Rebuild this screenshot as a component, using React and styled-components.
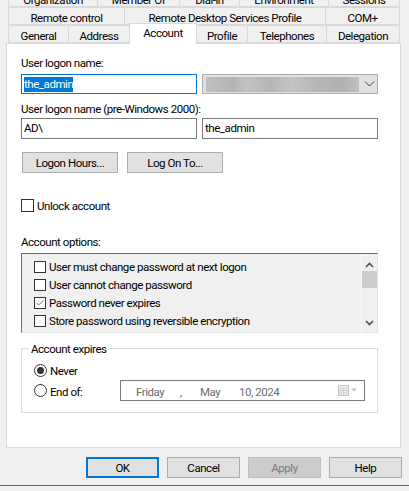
import React from 'react';
import styled, { createGlobalStyle } from 'styled-components';

const GlobalStyle = createGlobalStyle`
  html, body {
    margin: 0;
    padding: 0;
    background: #f0f0f0;
  }
  body {
    font-family: Roboto, 'Noto Sans', sans-serif;
    font-size: 11.5px;
    letter-spacing: -0.45px;
    color: #000;
  }
`;

const tabRows = [
  { height: 7, tabs: [['Organization', 90], ['Member Of', 83], ['Dial-in', 61], ['Environment', 90], ['Sessions', 72]] },
  { height: 18, tabs: [['Remote control', 117], ['Remote Desktop Services Profile', 202], ['COM+', 75]] },
  { height: 18, tabs: [['General', 61], ['Address', 62], ['Account', 68, true], ['Profile', 52], ['Telephones', 80], ['Delegation', 74]] },
];

const options = [
  ['User must change password at next logon', false],
  ['User cannot change password', false],
  ['Password never expires', true],
  ['Store password using reversible encryption', false],
];

const App = () => (
  <>
    <GlobalStyle />
    <Dialog>
      <TabArea>
        {tabRows.map((row, i) => (
          <TabRow key={i} $height={row.height}>
            {row.tabs.map(([label, width, active]) => (
              <Tab key={label} $width={width} $active={active}>{label}</Tab>
            ))}
          </TabRow>
        ))}
      </TabArea>

      <Panel>
        <FieldLabel>User logon name:</FieldLabel>
        <FieldRow $top={3}>
          <TextBox $focused><Selected>the_admin</Selected></TextBox>
          <ComboBox>
            <BlurredValue />
            <svg width="11" height="6" viewBox="0 0 11 6" fill="none" stroke="#444" strokeWidth="1">
              <path d="M1 .5l4.500 4.500L10 .5" />
            </svg>
          </ComboBox>
        </FieldRow>

        <FieldLabel $top={7}>User logon name (pre-Windows 2000):</FieldLabel>
        <FieldRow $top={1} $height={21}>
          <TextBox>AD\</TextBox>
          <TextBox>the_admin</TextBox>
        </FieldRow>

        <ButtonRow>
          <PushButton>Logon Hours...</PushButton>
          <PushButton>Log On To...</PushButton>
        </ButtonRow>

        <UnlockRow>
          <CheckBox $size={13} />
          <span>Unlock account</span>
        </UnlockRow>

        <FieldLabel $top={22}>Account options:</FieldLabel>
        <OptionsList>
          <OptionItems>
            {options.map(([label, checked]) => (
              <OptionItem key={label}>
                <CheckBox $size={12}>
                  {checked && (
                    <svg width="10" height="10" viewBox="0 0 10 10" fill="none" stroke="#777" strokeWidth="1">
                      <path d="M1.500 5l2 2 5-4.500" />
                    </svg>
                  )}
                </CheckBox>
                <span>{label}</span>
              </OptionItem>
            ))}
          </OptionItems>
          <ScrollBar>
            <svg width="9" height="6" viewBox="0 0 9 6" fill="none" stroke="#505050" strokeWidth="1.6">
              <path d="M1 5l3.500-3.500L8 5" />
            </svg>
            <ScrollThumb />
            <svg width="9" height="6" viewBox="0 0 9 6" fill="none" stroke="#505050" strokeWidth="1.6">
              <path d="M1 1l3.500 3.500L8 1" />
            </svg>
          </ScrollBar>
        </OptionsList>

        <ExpiresGroup>
          <GroupTitle>Account expires</GroupTitle>
          <RadioRow>
            <Radio $checked />
            <Caption>Never</Caption>
          </RadioRow>
          <RadioRow $date>
            <Radio />
            <EndOfLabel>End of:</EndOfLabel>
            <DateBox>
              <DatePart $width={44}>Friday</DatePart>
              <DatePart $width={20}>,</DatePart>
              <DatePart $width={39}>May</DatePart>
              <DatePart $width={99}>10, 2024</DatePart>
              <svg width="19" height="12" viewBox="0 0 19 12">
                <rect x="0.5" y="0.5" width="10" height="10" fill="#f4f4f4" stroke="#c4c4c4" />
                <path d="M3 3v7M5.500 3v7M8 3v7M1 3h9M1 5.500h9M1 8h9" stroke="#d0d0d0" strokeWidth="1" />
                <path d="M13 3.500h6l-3 3z" fill="#bdbdbd" />
              </svg>
            </DateBox>
          </RadioRow>
        </ExpiresGroup>
      </Panel>

      <Footer>
        <DialogButton $default>OK</DialogButton>
        <DialogButton>Cancel</DialogButton>
        <DialogButton $disabled>Apply</DialogButton>
        <DialogButton>Help</DialogButton>
      </Footer>
      <BottomEdge />
    </Dialog>
  </>
);

export default App;

const Dialog = styled.div`
  width: 409px;
  height: 491px;
  overflow: hidden;
  background: #f0f0f0;
  display: flex;
  flex-direction: column;
`;

const TabArea = styled.div`
  flex: none;
  padding-left: 8px;
`;

const TabRow = styled.div`
  display: flex;
  align-items: flex-end;
  height: ${(p) => p.$height}px;
  overflow: ${(p) => (p.$height < 18 ? 'hidden' : 'visible')};
`;

const Tab = styled.div`
  position: relative;
  box-sizing: border-box;
  flex: none;
  width: ${(p) => p.$width}px;
  height: ${(p) => (p.$active ? 21 : 18)}px;
  line-height: ${(p) => (p.$active ? 18 : 20)}px;
  margin-bottom: ${(p) => (p.$active ? -1 : 0)}px;
  margin-left: -1px;
  z-index: ${(p) => (p.$active ? 2 : 1)};
  text-align: center;
  white-space: nowrap;
  background: ${(p) => (p.$active ? '#fff' : '#f0f0f0')};
  border: 1px solid #d9d9d9;
  border-bottom: ${(p) => (p.$active ? 'none' : '1px solid #d9d9d9')};
  &:first-child {
    margin-left: 0;
  }
`;

const Panel = styled.div`
  box-sizing: border-box;
  flex: none;
  width: 395px;
  height: 405px;
  margin-left: 6px;
  padding: 11px 22px 0 14px;
  background: #fff;
  border: 1px solid #d9d9d9;
  display: flex;
  flex-direction: column;
`;

const FieldLabel = styled.div`
  flex: none;
  height: 16px;
  line-height: 17px;
  margin-top: ${(p) => p.$top || 0}px;
`;

const Caption = styled.span`
  padding-top: 2px;
  white-space: nowrap;
`;

const FieldRow = styled.div`
  flex: none;
  display: grid;
  grid-template-columns: 176px 176px;
  gap: 5px;
  height: ${(p) => p.$height || 20}px;
  margin-top: ${(p) => p.$top}px;
`;

const TextBox = styled.div`
  box-sizing: border-box;
  padding-left: 2px;
  line-height: 18px;
  background: #fff;
  border: 1px solid ${(p) => (p.$focused ? '#0078d7' : '#7a7a7a')};
`;

const Selected = styled.span`
  background: #0078d7;
  color: #fff;
  display: inline-block;
  height: 15px;
  line-height: 15px;
  margin-top: 1px;
`;

const ComboBox = styled.div`
  box-sizing: border-box;
  display: flex;
  align-items: center;
  gap: 5px;
  padding-left: 3px;
  background: #e1e1e1;
  border: 1px solid #adadad;
`;

const BlurredValue = styled.div`
  width: 153px;
  height: 15px;
  background: linear-gradient(
    90deg,
    #bfbfbf 0%,
    #b5b5b5 18%,
    #c2c2c2 26%,
    #b6b6b6 42%,
    #c4c4c4 56%,
    #b7b7b7 72%,
    #b0b0b0 88%,
    #c0c0c0 100%
  );
`;

const ButtonRow = styled.div`
  flex: none;
  display: flex;
  gap: 9px;
  margin: 13px 0 0 1px;
`;

const PushButton = styled.button`
  box-sizing: border-box;
  width: 96px;
  height: 21px;
  padding: 1px 0 0;
  font: inherit;
  letter-spacing: inherit;
  color: #000;
  background: #e1e1e1;
  border: 1px solid #adadad;
`;

const UnlockRow = styled.div`
  flex: none;
  display: flex;
  align-items: center;
  gap: 3px;
  height: 13px;
  margin-top: 26px;
`;

const CheckBox = styled.span`
  box-sizing: border-box;
  flex: none;
  width: ${(p) => p.$size}px;
  height: ${(p) => p.$size}px;
  display: flex;
  background: #fff;
  border: 1px solid #333;
  svg {
    display: block;
  }
`;

const OptionsList = styled.div`
  box-sizing: border-box;
  flex: none;
  height: 80px;
  margin-top: 3px;
  display: flex;
  justify-content: space-between;
  background: #f0f0f0;
  border-style: solid;
  border-width: 1px;
  border-color: #6d6d6d #e3e3e3 #e3e3e3 #6d6d6d;
`;

const OptionItems = styled.div`
  padding: 4px 0 0 12px;
`;

const OptionItem = styled.div`
  display: flex;
  align-items: center;
  gap: 3px;
  height: 18px;
  white-space: nowrap;
`;

const ScrollBar = styled.div`
  box-sizing: border-box;
  width: 16px;
  border-left: 1px solid #fafafa;
  padding: 8px 0 6px;
  display: flex;
  flex-direction: column;
  align-items: center;
  justify-content: space-between;
`;

const ScrollThumb = styled.div`
  align-self: stretch;
  height: 17px;
  margin-top: 3px;
  margin-bottom: auto;
  background: #cdcdcd;
`;

const ExpiresGroup = styled.div`
  position: relative;
  box-sizing: border-box;
  flex: none;
  height: 65px;
  margin-top: 15px;
  padding: 12px 12px 0;
  border: 1px solid #dcdcdc;
`;

const GroupTitle = styled.div`
  position: absolute;
  top: -8px;
  left: 7px;
  padding: 0 2px;
  line-height: 17px;
  background: #fff;
`;

const RadioRow = styled.div`
  display: flex;
  align-items: center;
  height: ${(p) => (p.$date ? 21 : 18)}px;
  margin-top: ${(p) => (p.$date ? 1 : 0)}px;
  gap: 3px;
`;

const Radio = styled.span`
  box-sizing: border-box;
  flex: none;
  width: 13px;
  height: 13px;
  border-radius: 50%;
  background: #fff;
  border: 1px solid #333;
  display: flex;
  align-items: center;
  justify-content: center;
  &::after {
    content: '';
    display: ${(p) => (p.$checked ? 'block' : 'none')};
    width: 7px;
    height: 7px;
    border-radius: 50%;
    background: #333;
  }
`;

const EndOfLabel = styled(Caption)`
  width: 67px;
`;

const DateBox = styled.div`
  box-sizing: border-box;
  width: 245px;
  height: 21px;
  padding-left: 15px;
  display: flex;
  align-items: center;
  color: #6d6d6d;
  background: #fff;
  border: 1px solid #7a7a7a;
`;

const DatePart = styled(Caption)`
  flex: none;
  width: ${(p) => p.$width}px;
`;

const Footer = styled.div`
  flex: none;
  display: flex;
  justify-content: flex-end;
  gap: 8px;
  padding: 9px 7px 0 0;
`;

const DialogButton = styled.button`
  box-sizing: border-box;
  width: 73px;
  height: 21px;
  padding: 1px 0 0;
  font: inherit;
  letter-spacing: inherit;
  color: ${(p) => (p.$disabled ? '#7a7a7a' : '#000')};
  background: ${(p) => (p.$disabled ? '#cccccc' : '#e1e1e1')};
  border: ${(p) => (p.$default ? '2px solid #0078d7' : p.$disabled ? '1px solid #bfbfbf' : '1px solid #adadad')};
`;

const BottomEdge = styled.div`
  flex: none;
  height: 1px;
  margin-top: 7px;
  background: #666;
`;
